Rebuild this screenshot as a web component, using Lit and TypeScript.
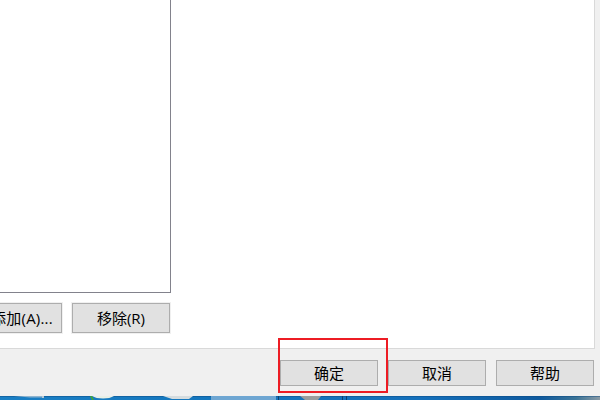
import { LitElement, html, css } from "lit";
import { customElement } from "lit/decorators.js";

@customElement("app-root")
export class AppRoot extends LitElement {
  static styles = css`
    :host {
      display: flex;
      flex-direction: column;
      position: relative;
      width: 600px;
      height: 400px;
      overflow: hidden;
      background: #f0f0f0;
      font-family: "Open Sans", "Noto Sans CJK SC", sans-serif;
      font-size: 15px;
      color: #000;
    }
    .panel {
      box-sizing: border-box;
      height: 349px;
      flex: none;
      margin: 0 5px 0 -2px;
      background: #fff;
      border-right: 1px solid #d9d9d9;
      border-bottom: 1px solid #d9d9d9;
      display: flex;
    }
    .left {
      width: 174px;
      margin-left: -1px;
      display: flex;
      flex-direction: column;
      gap: 10px;
      height: 333px;
      flex: none;
    }
    .list {
      flex: 1;
      border-right: 1px solid #82828c;
      border-bottom: 1px solid #82828c;
      background: #fff;
    }
    .list-buttons {
      display: flex;
      justify-content: flex-end;
      gap: 10px;
      flex: none;
      padding-right: 1px;
    }
    .btn {
      box-sizing: border-box;
      flex: none;
      width: 98px;
      height: 26px;
      padding: 0;
      background: #e1e1e1;
      border: 1px solid #adadad;
      font: inherit;
      color: inherit;
      line-height: 1;
      display: flex;
      align-items: center;
      justify-content: center;
      white-space: nowrap;
    }
    .list-buttons .btn {
      height: 30px;
      box-shadow: 0 0 0 1px #f0f0f0;
    }
    .list-buttons .add {
      width: 80px;
      letter-spacing: 0.2px;
    }
    .footer {
      flex: 1;
      display: flex;
      justify-content: flex-end;
      align-items: flex-start;
      gap: 10px;
      padding: 11px 6px 0 0;
    }
    .desktop {
      flex: none;
      display: block;
      width: 600px;
      height: 4px;
    }
    .mark {
      position: absolute;
      box-sizing: border-box;
      left: 278px;
      top: 338px;
      width: 110px;
      height: 55px;
      border: 2px solid #ed1c24;
      pointer-events: none;
    }
  `;

  render() {
    return html`
      <div class="panel">
        <div class="left">
          <div class="list"></div>
          <div class="list-buttons">
            <button class="btn add">添加(A)...</button>
            <button class="btn">移除(R)</button>
          </div>
        </div>
      </div>
      <div class="footer">
        <button class="btn">确定</button>
        <button class="btn">取消</button>
        <button class="btn">帮助</button>
      </div>
      <svg class="desktop" viewBox="0 0 600 4" preserveAspectRatio="none">
        <defs>
          <linearGradient id="sky" x1="0" x2="1" y1="0" y2="0">
            <stop offset="0" stop-color="#1a7fc4" />
            <stop offset="0.35" stop-color="#1476bd" />
            <stop offset="0.7" stop-color="#1570bb" />
            <stop offset="0.9" stop-color="#0f5a9e" />
            <stop offset="0.96" stop-color="#3a7396" />
            <stop offset="1" stop-color="#8a9aa5" />
          </linearGradient>
        </defs>
        <rect width="600" height="4" fill="url(#sky)" />
        <rect width="600" height="1" fill="#0d4a80" opacity="0.45" />
        <path d="M14 0H44V1.5H30Z" fill="#8fb4cf" />
        <rect x="42" y="0" width="2" height="2" fill="#b9c8d2" />
        <path d="M90 0L92 4H94L92 0Z" fill="#3fa53a" />
        <path d="M92 0H114Q110 2.5 103 2.5Q96 2.5 92 0Z" fill="#e8efe6" />
        <path d="M163 0H193L189 3H172Z" fill="#d5dcdf" />
        <rect x="211" y="0" width="65" height="4" fill="#6ea6d2" />
        <rect x="278" y="0" width="1" height="4" fill="#0c3f6e" />
        <path d="M300 0H321L318 4H305Z" fill="#9a9d9e" />
        <rect x="342" y="0" width="1" height="4" fill="#0c3f6e" />
        <rect x="346" y="0" width="1" height="4" fill="#0c3f6e" />
      </svg>
      <div class="mark"></div>
    `;
  }
}
